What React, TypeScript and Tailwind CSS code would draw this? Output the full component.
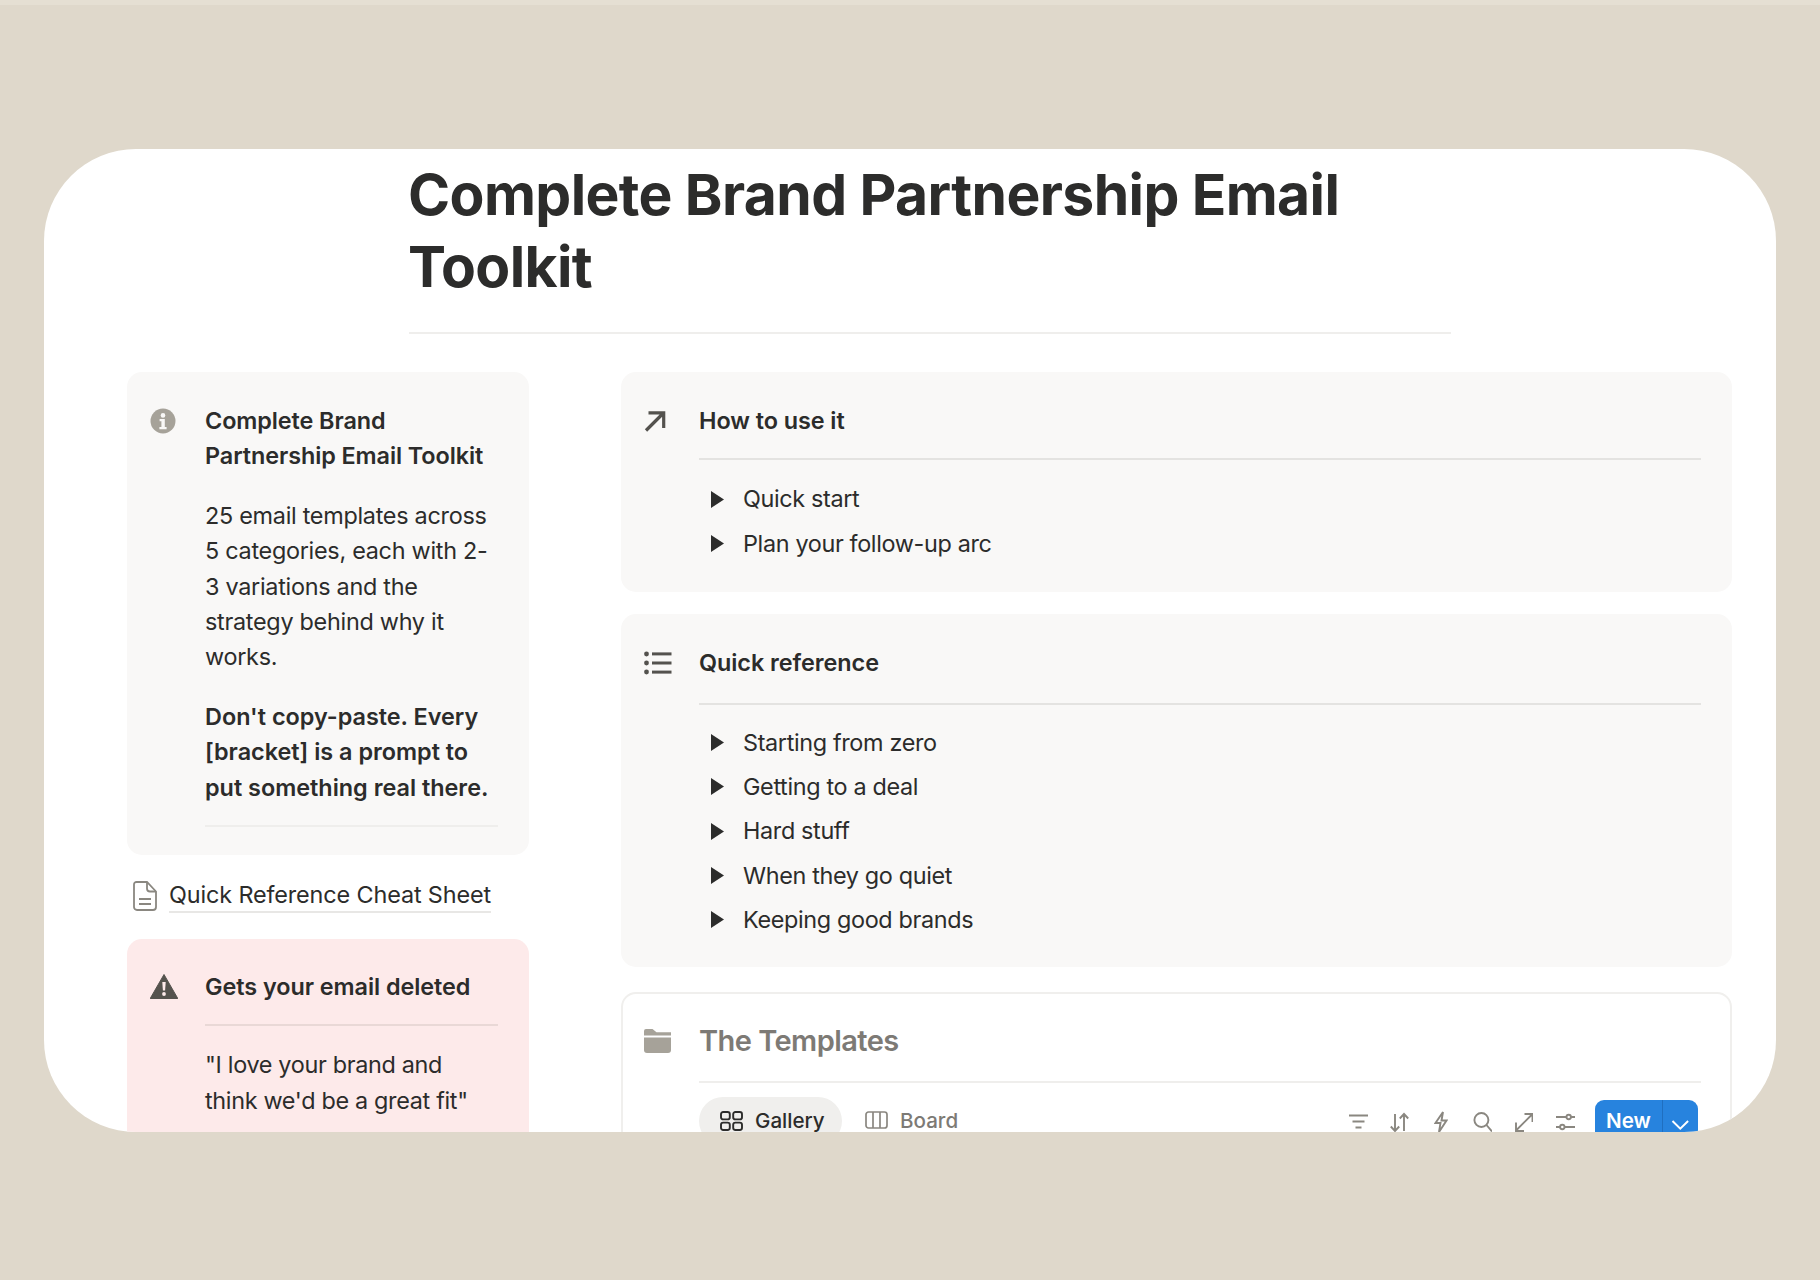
const TEXT = 'text-[#2c2c2b]';

function InfoIcon() {
  return (
    <svg width="26" height="26" viewBox="0 0 26 26" className="shrink-0">
      <circle cx="13" cy="13" r="12.5" fill="#a6a299" />
      <circle cx="13" cy="7.4" r="2.3" fill="#f9f8f7" />
      <path d="M9.6 11h5.2v8h1.8v2.2H9.4V19h2v-5.8H9.6z" fill="#f9f8f7" />
    </svg>
  );
}

function ArrowIcon() {
  return (
    <svg width="22" height="22" viewBox="0 0 22 22" fill="none" stroke="#54524e" strokeWidth="3.2">
      <path d="M2 20.5 19.5 3M4.5 2.8h15.2V18" />
    </svg>
  );
}

function ListIcon() {
  return (
    <svg width="28" height="24" viewBox="0 0 28 24" fill="#54524e">
      <circle cx="2.5" cy="3" r="2.4" />
      <circle cx="2.5" cy="12" r="2.4" />
      <circle cx="2.5" cy="21" r="2.4" />
      <rect x="8" y="1.4" width="19.5" height="3" />
      <rect x="8" y="10.5" width="19.5" height="3" />
      <rect x="8" y="19.6" width="19.5" height="3" />
    </svg>
  );
}

function WarningIcon() {
  return (
    <svg width="28" height="25" viewBox="0 0 28 25" className="shrink-0">
      <path d="M14 .5 27.8 24.5H.2z" fill="#55534e" stroke="#55534e" strokeLinejoin="round" />
      <path d="M12.3 8h3.4l-.6 8.6h-2.2z" fill="#fdeaea" />
      <circle cx="14" cy="20" r="1.9" fill="#fdeaea" />
    </svg>
  );
}

function DocIcon() {
  return (
    <svg width="24" height="30" viewBox="0 0 24 30" fill="none" stroke="#8a8780" strokeWidth="1.8" className="shrink-0">
      <path d="M3.5 1h10.5L23 10.5V26a3 3 0 0 1-3 3H4a3 3 0 0 1-3-3V3.5A2.5 2.5 0 0 1 3.5 1z" />
      <path d="M14 1v6.5a3 3 0 0 0 3 3h6M6 18h12M6 23h12" />
    </svg>
  );
}

function FolderIcon() {
  return (
    <svg width="27" height="24" viewBox="0 0 27 24" fill="#a6a299">
      <path d="M0 2a2 2 0 0 1 2-2h6.5l4 3.2H27v3.3H0z" />
      <path d="M0 8.6h27V21a3 3 0 0 1-3 3H3a3 3 0 0 1-3-3z" />
    </svg>
  );
}

function GalleryIcon() {
  return (
    <svg width="23" height="20" viewBox="0 0 23 20" fill="none" stroke="#2c2c2b" strokeWidth="1.9" className="shrink-0">
      <rect x="1" y="1" width="8.8" height="7.4" rx="2.2" />
      <rect x="13.2" y="1" width="8.8" height="7.4" rx="2.2" />
      <rect x="1" y="11.6" width="8.8" height="7.4" rx="2.2" />
      <rect x="13.2" y="11.6" width="8.8" height="7.4" rx="2.2" />
    </svg>
  );
}

function BoardIcon() {
  return (
    <svg width="23" height="19" viewBox="0 0 23 19" fill="none" stroke="#8a8780" strokeWidth="1.7" className="shrink-0">
      <rect x="1" y="1" width="21" height="16" rx="2.5" />
      <path d="M8 1v16M15 1v16" />
    </svg>
  );
}

function ToolIcon({ width, children }: { width: number; children: React.ReactNode }) {
  return (
    <span className="flex w-[41.4px] justify-center">
      <svg width={width} height="22" viewBox={`0 0 ${width} 22`} fill="none" stroke="#8a8780" strokeWidth="1.9" className="shrink-0">
        {children}
      </svg>
    </span>
  );
}

function Toolbar() {
  return (
    <div className="flex items-center">
      <div className="flex items-center">
        <ToolIcon width={19}>
          <path d="M0 4.5h19M3.5 10.5h12M6.5 16.5h6" />
        </ToolIcon>
        <ToolIcon width={19}>
          <path d="M5 3v17M.8 15.5 5 20l4.2-4.5M14 20V3M9.8 7.5 14 3l4.2 4.5" />
        </ToolIcon>
        <ToolIcon width={14}>
          <path d="M9 1 1.5 12H6.5L5 21 12.5 9.5H7.5z" />
        </ToolIcon>
        <ToolIcon width={19}>
          <circle cx="8.4" cy="9" r="7" />
          <path d="m13.5 14 5.5 6.5" />
        </ToolIcon>
        <ToolIcon width={18}>
          <path d="M1 19.5 17 3.5M9.5 3h8v8M1 11.5v8.5h8" />
        </ToolIcon>
        <ToolIcon width={19}>
          <path d="M0 6h10.5M15 6h4M0 16h4M8.5 16H19" />
          <circle cx="12.7" cy="6" r="2.2" />
          <circle cx="6.3" cy="16" r="2.2" />
        </ToolIcon>
      </div>
      <div className="ml-[9px] flex h-[44px] w-[103px] items-start overflow-hidden rounded-[9px] bg-[#2783de] text-white">
        <span className="flex h-full w-[68px] justify-center border-r border-[#1f6fc0] pt-[6px] text-[20.6px] leading-[30px] font-semibold">New</span>
        <svg width="35" height="30" viewBox="0 0 35 30" fill="none" stroke="white" strokeWidth="2" className="mt-[7px]">
          <path d="m9.5 14 7.8 7.6 7.8-7.6" />
        </svg>
      </div>
    </div>
  );
}

function Section({
  icon,
  title,
  items,
  headGap,
  listTop,
  bottom,
}: {
  icon: React.ReactNode;
  title: string;
  items: string[];
  headGap: string;
  listTop: string;
  bottom: string;
}) {
  return (
    <section className={`rounded-[15px] bg-[#f9f8f7] pt-[31px] pr-[31px] pl-[23px] ${bottom}`}>
      <div className="flex">
        <div className="flex h-[35px] w-[55px] shrink-0 items-center">{icon}</div>
        <h2 className={`${TEXT} text-[23.4px] leading-[35.4px] font-semibold tracking-[-0.05px]`}>{title}</h2>
      </div>
      <div className={`ml-[55px] border-t-2 border-[#e4e3e1] ${headGap}`}>
        <ul className={`flex flex-col gap-[9px] ${listTop}`}>
          {items.map((item) => (
            <li key={item} className="flex items-center">
              <svg width="13" height="17" viewBox="0 0 13 17" className="ml-[12px] shrink-0" fill="#2c2c2b">
                <path d="M0 0 13 8.5 0 17z" />
              </svg>
              <span className={`${TEXT} ml-[19px] text-[23.4px] leading-[35.4px] tracking-[-0.35px]`}>{item}</span>
            </li>
          ))}
        </ul>
      </div>
    </section>
  );
}

export default function App() {
  return (
    <div className="h-[1280px] w-full overflow-hidden bg-[#dfd8cb] font-['Inter',sans-serif]">
      <div className="h-[5px] bg-[#e5dfd3]" />
      <main className="mx-[44px] mt-[144px] h-[983px] overflow-hidden rounded-[92px] bg-white">
        <header className="ml-[365px] w-[1042px] border-b-2 border-[#efeeec] pt-[10px] pb-[29px]">
          <h1 className="-ml-[1px] text-[57px] leading-[72px] font-bold tracking-[-0.6px] text-[#2c2c2b]">
            Complete Brand Partnership Email Toolkit
          </h1>
        </header>
        <div className="mt-[38px] flex gap-[92px] pr-[44px] pl-[83px]">
          <aside className="w-[402px] shrink-0">
            <div className="flex rounded-[15px] bg-[#f9f8f7] pt-[31px] pr-[31px] pb-[28px] pl-[23px]">
              <div className="flex h-[35px] w-[55px] shrink-0 items-center">
                <InfoIcon />
              </div>
              <div className={`${TEXT} flex-1 border-b-2 border-[#efeeec] pb-[20px] text-[23.4px] leading-[35.4px]`}>
                <p className="font-semibold tracking-[-0.08px]">Complete Brand Partnership Email Toolkit</p>
                <p className="mt-6 tracking-[-0.28px]">25 email templates across 5 categories, each with 2-3 variations and the strategy behind why it works.</p>
                <p className="mt-6 font-semibold">Don't copy-paste. Every [bracket] is a prompt to put something real there.</p>
              </div>
            </div>
            <a className={`${TEXT} mt-[24px] mb-[26px] flex items-center text-[23.4px] leading-[32px] tracking-[-0.13px]`}>
              <span className="ml-[6px] w-[36px]">
                <DocIcon />
              </span>
              <span className="border-b-2 border-[#e8e7e5]">Quick Reference Cheat Sheet</span>
            </a>
            <div className="flex rounded-[15px] bg-[#fdeaea] pt-[30px] pr-[31px] pb-[30px] pl-[23px]">
              <div className="flex h-[35px] w-[55px] shrink-0 items-center">
                <WarningIcon />
              </div>
              <div className={`${TEXT} flex-1 text-[23.4px] leading-[35.4px]`}>
                <p className="border-b-2 border-[#e9d8d6] pb-[20px] font-semibold tracking-[-0.05px]">Gets your email deleted</p>
                <p className="mt-[21px] tracking-[-0.32px]">"I love your brand and think we'd be a great fit"</p>
              </div>
            </div>
          </aside>
          <div className="flex min-w-0 flex-1 flex-col">
            <Section
              icon={<ArrowIcon />}
              title="How to use it"
              items={['Quick start', 'Plan your follow-up arc']}
              headGap="mt-[20px]"
              listTop="pt-[21px]"
              bottom="pb-[31px]"
            />
            <div className="mt-[22px]">
              <Section
                icon={<ListIcon />}
                title="Quick reference"
                items={['Starting from zero', 'Getting to a deal', 'Hard stuff', 'When they go quiet', 'Keeping good brands']}
                headGap="mt-[22px]"
                listTop="pt-[20px]"
                bottom="pb-[29px]"
              />
            </div>
            <section className="mt-[25px] rounded-[15px] border-2 border-[#f0efed] pt-[25px] pr-[29px] pl-[21px]">
              <div className="flex items-center">
                <div className="w-[55px] shrink-0">
                  <FolderIcon />
                </div>
                <h2 className="text-[29px] leading-[44px] font-semibold tracking-[-0.55px] text-[#7d7a75]">The Templates</h2>
              </div>
              <div className="mt-[18px] ml-[55px] flex items-start justify-between border-t-2 border-[#efeeec] pt-[14px]">
                <div className="flex items-center">
                  <div className="flex h-[48px] w-[143px] items-center rounded-full bg-[#f0efed] pl-[21px]">
                    <GalleryIcon />
                    <span className="ml-[12px] text-[20.6px] leading-[30px] font-medium text-[#2c2c2b]">Gallery</span>
                  </div>
                  <div className="ml-[23px] flex items-center">
                    <BoardIcon />
                    <span className="ml-[12px] text-[20.6px] leading-[30px] font-medium text-[#7d7a75]">Board</span>
                  </div>
                </div>
                <div className="pt-[3px] pr-[3px]">
                  <Toolbar />
                </div>
              </div>
            </section>
          </div>
        </div>
      </main>
    </div>
  );
}
